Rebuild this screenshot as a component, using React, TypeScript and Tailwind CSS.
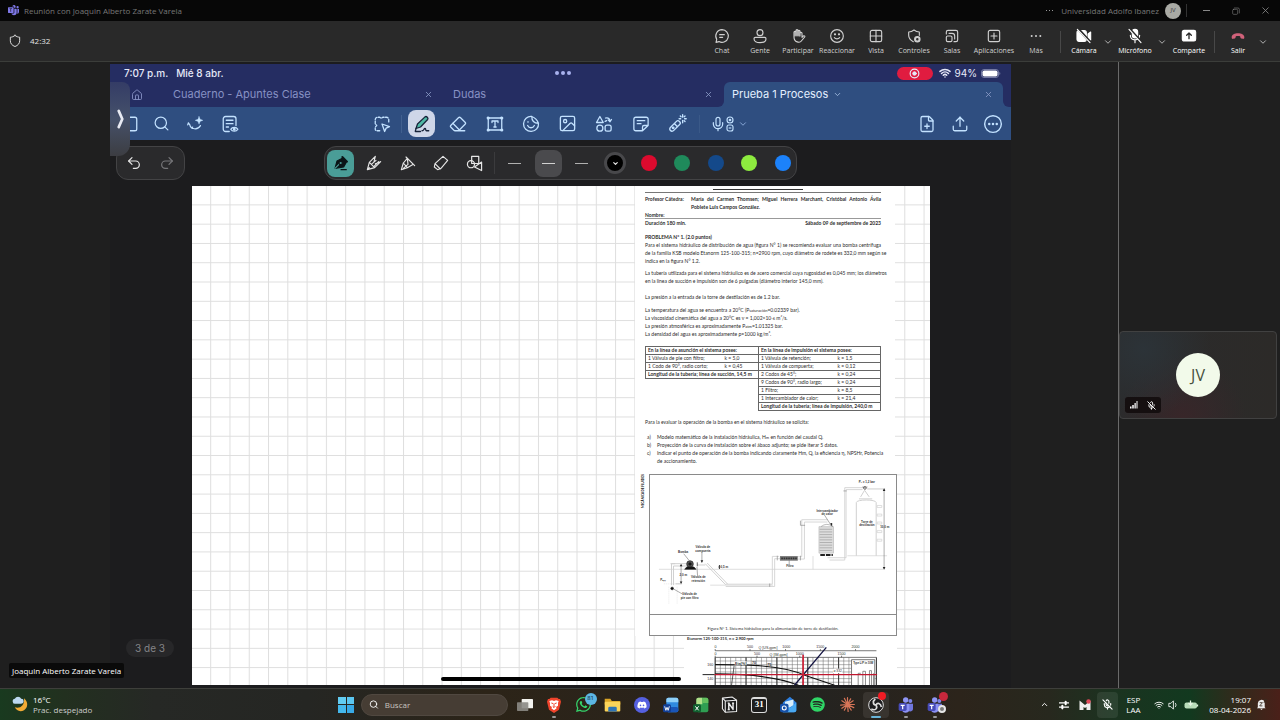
import type { ReactNode } from 'react';
import {
  ChevronDown,
  ChevronUp,
  Eraser,
  FilePlus,
  House,
  Image as ImageIcon,
  Mic,
  MicOff,
  Redo2,
  Search,
  Undo2,
  Upload,
  Wifi,
  X,
} from 'lucide-react';
import { FaDiscord, FaSpotify, FaWhatsapp } from 'react-icons/fa';
import { BsMicrosoftTeams } from 'react-icons/bs';

type IconProps = { className?: string; children: ReactNode };

function Line({ className = 'size-4', children }: IconProps) {
  return (
    <svg
      viewBox="0 0 24 24"
      className={className}
      fill="none"
      stroke="currentColor"
      strokeWidth="1.7"
      strokeLinecap="round"
      strokeLinejoin="round"
      aria-hidden="true"
    >
      {children}
    </svg>
  );
}

/* ---------- Meeting window ---------- */

function TitleBar() {
  return (
    <header className="flex h-[21px] shrink-0 items-center bg-[#070707] pl-2 text-[8px] text-[#777]">
      <BsMicrosoftTeams className="size-[11px] text-[#7f78e8]" />
      <h1 className="ml-[5px]">Reunión con Joaquin Alberto Zarate Varela</h1>
      <div className="ml-auto flex items-center">
        <button aria-label="Más opciones" className="mr-2 flex gap-[2px]">
          <i className="size-px bg-[#999]" />
          <i className="size-px bg-[#999]" />
          <i className="size-px bg-[#999]" />
        </button>
        <span>Universidad Adolfo Ibanez</span>
        <span className="ml-[6px] flex size-4 items-center justify-center rounded-full bg-[#a9aaa4] text-[6px] text-[#333]">
          JV
        </span>
        <span className="ml-[5px] h-[13px] w-px bg-[#333]" />
        <button aria-label="Minimizar" className="ml-4 h-px w-[7px] bg-[#888]" />
        <button aria-label="Restaurar" className="ml-[22px] text-[#888]">
          <Line className="size-2">
            <rect x="2" y="7" width="15" height="15" rx="3" />
            <path d="M7 3h11a4 4 0 0 1 4 4v11" />
          </Line>
        </button>
        <button aria-label="Cerrar" className="ml-5 mr-[9px] text-[#888]">
          <X className="size-[11px]" strokeWidth={1.8} />
        </button>
      </div>
    </header>
  );
}

const meetingActions: { label: string; width: string; icon: ReactNode }[] = [
  {
    label: 'Chat',
    width: 'w-[38px]',
    icon: (
      <Line>
        <path d="M12 2.500A9.500 9.500 0 1 1 7.500 20.400L3 21.500l1.100-4.500A9.500 9.500 0 0 1 12 2.500zM8.500 10h7M8.500 14h4.500" />
      </Line>
    ),
  },
  {
    label: 'Gente',
    width: 'w-[38px]',
    icon: (
      <Line>
        <circle cx="12" cy="7" r="4.5" />
        <path d="M5 14h14a2 2 0 0 1 2 2c0 4-4 6-9 6s-9-2-9-6a2 2 0 0 1 2-2z" />
      </Line>
    ),
  },
  {
    label: 'Participar',
    width: 'w-[38px]',
    icon: (
      <Line>
        <path d="M6 14V6.500a1.500 1.500 0 0 1 3 0V11 4a1.500 1.500 0 0 1 3 0v7-6a1.500 1.500 0 0 1 3 0v7-4a1.500 1.500 0 0 1 3 0v6l2-2c1-1 3 .2 2 1.500l-5 6c-2 3-11 2.500-11-6z" />
        <path d="M7.500 6v6M10.500 4v8M13.500 5v7" />
      </Line>
    ),
  },
  {
    label: 'Reaccionar',
    width: 'w-10',
    icon: (
      <Line>
        <circle cx="12" cy="12" r="9.500" />
        <path d="M8 14.500c2 2.500 6 2.500 8 0" />
        <circle cx="9" cy="9.500" r=".8" fill="currentColor" />
        <circle cx="15" cy="9.500" r=".8" fill="currentColor" />
      </Line>
    ),
  },
  {
    label: 'Vista',
    width: 'w-[38px]',
    icon: (
      <Line>
        <rect x="3.500" y="3.500" width="17" height="17" rx="2.500" />
        <path d="M12 3.500v17M3.500 12h17" />
      </Line>
    ),
  },
  {
    label: 'Controles',
    width: 'w-[38px]',
    icon: (
      <Line>
        <path d="M11 20.500C6 18 4 15 4 11V6c3 0 5.500-1 8-3 2.500 2 5 3 8 3v5" />
        <circle cx="17" cy="17" r="4" fill="currentColor" />
        <circle cx="17" cy="17" r="1" fill="#292929" stroke="#292929" />
      </Line>
    ),
  },
  {
    label: 'Salas',
    width: 'w-[38px]',
    icon: (
      <Line>
        <path d="M3.500 9V6A2.500 2.500 0 0 1 6 3.500h12A2.500 2.500 0 0 1 20.500 6v12a2.500 2.500 0 0 1-2.500 2.500h-3" />
        <rect x="3.500" y="12" width="8.500" height="8.500" rx="2" />
        <path d="M7.500 8H12a4 4 0 0 1 4 4v4.500" />
      </Line>
    ),
  },
  {
    label: 'Aplicaciones',
    width: 'w-[46px]',
    icon: (
      <Line>
        <rect x="3.500" y="3.500" width="17" height="17" rx="2.500" />
        <path d="M12 7.500v9M7.500 12h9" />
      </Line>
    ),
  },
  {
    label: 'Más',
    width: 'w-[38px]',
    icon: (
      <Line>
        <g fill="currentColor" stroke="none">
          <circle cx="5.500" cy="12" r="1.500" />
          <circle cx="12" cy="12" r="1.500" />
          <circle cx="18.500" cy="12" r="1.500" />
        </g>
      </Line>
    ),
  },
];

function MeetingButton({
  label,
  width,
  tone = 'text-[#d0d0d0]',
  children,
}: {
  label: string;
  width: string;
  tone?: string;
  children: ReactNode;
}) {
  return (
    <button className={`flex ${width} flex-col items-center gap-[2px] ${tone}`}>
      {children}
      <span className="text-[7px] leading-[10px]">{label}</span>
    </button>
  );
}

function Caret({ label }: { label: string }) {
  return (
    <button aria-label={label} className="flex w-[12px] justify-center text-[#ccc]">
      <ChevronDown className="size-[10px]" strokeWidth={2} />
    </button>
  );
}

function MeetingToolbar() {
  return (
    <nav className="flex h-[41px] shrink-0 items-center border-b border-[#3b3d3a] bg-[#292929] pl-2">
      <Line className="size-[14px] text-[#ddd]">
        <path d="M12 2.500c2.500 2 5.500 3 8 3v6c0 5-3 8-8 10-5-2-8-5-8-10v-6c2.500 0 5.500-1 8-3z" />
      </Line>
      <time className="ml-2 text-[8px] text-[#e4e4e4]">42:32</time>
      <div className="ml-auto flex items-center pt-[2px] pr-[11px]">
        {meetingActions.map((a) => (
          <MeetingButton key={a.label} label={a.label} width={a.width}>
            {a.icon}
          </MeetingButton>
        ))}
        <span className="mx-[5px] h-[22px] w-px bg-[#484848]" />
        <MeetingButton label="Cámara" width="w-9" tone="text-white">
          <Line>
            <rect x="1.500" y="4" width="14" height="16" rx="3" fill="currentColor" />
            <path d="M18 9l4-3v12l-4-3z" fill="currentColor" />
            <path d="M3 1l19 21" stroke="#292929" strokeWidth="4" />
            <path d="M2 2l19 20" />
          </Line>
        </MeetingButton>
        <Caret label="Opciones de cámara" />
        <MeetingButton label="Micrófono" width="w-[42px]" tone="text-white">
          <Line>
            <rect x="8" y="2" width="8" height="13" rx="4" fill="currentColor" />
            <path d="M5 11c0 9 14 9 14 0M12 18v4" />
            <path d="M4 1l18 20" stroke="#292929" strokeWidth="3" />
            <path d="M3 2l18 20" />
          </Line>
        </MeetingButton>
        <Caret label="Opciones de micrófono" />
        <MeetingButton label="Comparte" width="w-[42px]" tone="text-white">
          <Line>
            <rect x="2" y="3.500" width="20" height="16" rx="2.500" fill="currentColor" />
            <path d="M12 16V7.500M8.500 11L12 7.500l3.500 3.500" stroke="#292929" strokeWidth="2" />
          </Line>
        </MeetingButton>
        <span className="mx-1 h-[22px] w-px bg-[#484848]" />
        <MeetingButton label="Salir" width="w-[38px]" tone="text-white">
          <Line className="size-4 text-[#d0627a]">
            <path
              d="M2.500 14c0-8 19-8 19 0 0 2-.8 2.500-2 2.300l-2.800-.6c-1.500-.4-1-2.700-1.600-3.200-1.500-.8-4.700-.8-6.200 0-.6.500-.1 2.800-1.600 3.200l-2.800.6c-1.200.2-2-.3-2-2.300z"
              fill="currentColor"
              stroke="none"
            />
          </Line>
        </MeetingButton>
        <Caret label="Opciones para salir" />
      </div>
    </nav>
  );
}

/* ---------- Shared tablet screen ---------- */

function StatusBar() {
  return (
    <div className="flex h-[18px] items-center bg-[#252d62] pl-[14px] pr-[10px] text-[10px] font-medium text-[#e6e9f8]">
      <span className="flex flex-1 gap-2">
        <time>7:07 p.m.</time>
        <span>Mié 8 abr.</span>
      </span>
      <span className="flex gap-[2px]">
        <i className="size-1 rounded-full bg-[#a9b2ee]" />
        <i className="size-1 rounded-full bg-[#a9b2ee]" />
        <i className="size-1 rounded-full bg-[#a9b2ee]" />
      </span>
      <span className="flex flex-1 items-center justify-end gap-1">
        <span className="mr-[2px] flex h-[13px] w-9 items-center justify-center rounded-full bg-[#e01c40]">
          <Line className="size-[11px]">
            <circle cx="12" cy="12" r="9.500" strokeWidth="2.500" />
            <circle cx="12" cy="12" r="4" fill="currentColor" />
          </Line>
        </span>
        <Wifi className="size-3" strokeWidth={3} />
        <span className="font-normal">94%</span>
        <svg viewBox="0 0 40 18" className="h-[9px] w-5" aria-hidden="true">
          <rect x="1" y="1" width="34" height="16" rx="5" fill="none" stroke="#8d93b8" strokeWidth="1.500" />
          <rect x="3" y="3" width="30" height="12" rx="3.500" fill="#fff" />
          <path d="M37 6v6c2-1 2-5 0-6z" fill="#8d93b8" />
        </svg>
      </span>
    </div>
  );
}

function TabClose({ name }: { name: string }) {
  return (
    <button aria-label={`Cerrar ${name}`} className="ml-auto text-[#8a9ac6]">
      <X className="size-[9px]" strokeWidth={2.2} />
    </button>
  );
}

function Tabs() {
  return (
    <div className="flex h-[25px] bg-[#2f4e80] text-[11px] text-[#8791c4]">
      <div className="flex flex-1 items-center rounded-br-md bg-[#252d62] pl-[21px] pr-[11px]">
        <button aria-label="Inicio">
          <House className="size-3" strokeWidth={1.8} />
        </button>
        <button className="ml-[30px]">Cuaderno - Apuntes Clase</button>
        <TabClose name="Cuaderno" />
        <div className="ml-5 flex w-[260px] items-center">
          <button>Dudas</button>
          <TabClose name="Dudas" />
        </div>
      </div>
      <div className="w-[279px] bg-linear-to-b from-[#252d62] from-50% to-[#2f4e80] to-50%">
        <div className="flex h-full items-center rounded-t-md bg-[#2f4e80] pl-2 pr-[10px] text-[#e3efff]">
          <button className="flex items-center gap-[5px]">
            Prueba 1 Procesos
            <ChevronDown className="size-[9px] text-[#a9c2e6]" strokeWidth={2.2} />
          </button>
          <TabClose name="Prueba 1 Procesos" />
        </div>
      </div>
      <div className="w-2 rounded-bl-md bg-[#252d62]" />
    </div>
  );
}

function ToolCell({ label, active, children }: { label: string; active?: boolean; children: ReactNode }) {
  return (
    <button
      aria-label={label}
      className={`flex size-[27px] items-center justify-center rounded-lg ${active ? 'bg-[#ced6e8] text-[#17233a]' : ''}`}
    >
      {children}
    </button>
  );
}

function NoteToolbar() {
  return (
    <div className="flex h-[33px] items-center bg-[#2f4e80] text-[#c3e2ff]">
      <div className="flex flex-1 items-center pl-[14px]">
        <button aria-label="Páginas" className="w-[22px]">
          <Line className="size-[18px]">
            <rect x="3" y="3" width="14" height="18" rx="2.500" />
          </Line>
        </button>
        <div className="ml-[2px] flex gap-[7px]">
          <ToolCell label="Buscar">
            <Search className="size-[17px]" strokeWidth={1.7} />
          </ToolCell>
          <ToolCell label="Asistente">
            <Line className="size-[17px]">
              <path d="M2 11l2 3c1 6 11 8 15 1M2 11l-1 3M8 17l-1 2" />
              <path d="M17 2l1.500 4 4 1.500-4 1.500L17 13l-1.500-4-4-1.500 4-1.500z" fill="currentColor" strokeWidth="0.500" />
            </Line>
          </ToolCell>
          <ToolCell label="Vista de lectura">
            <Line className="size-[18px]">
              <path d="M11 22H6a3 3 0 0 1-3-3V5a3 3 0 0 1 3-3h11a3 3 0 0 1 3 3v9M7 7h9M7 11.500h9M7 16h3" />
              <path d="M13 19c2-3.500 7.500-3.500 9.500 0-2 3.500-7.500 3.500-9.500 0z" />
              <circle cx="17.700" cy="19" r="1" />
            </Line>
          </ToolCell>
        </div>
      </div>
      <div className="flex items-center pr-[14px]">
        <ToolCell label="Lazo">
          <Line className="size-[18px]">
            <path d="M9 21H5a2 2 0 0 1-2-2v-3l2-2-2-2V6M3 6a3 3 0 0 1 3-3h3l2 1.500L13 3h5a3 3 0 0 1 3 3v4" strokeDasharray="3.500 1.800" />
            <path d="M12 12l10 3.500-4.500 2L15.500 22z" />
          </Line>
        </ToolCell>
        <span className="mx-[6px] h-[18px] w-px bg-[#41608f]" />
        <div className="flex w-[283px] items-center justify-between">
          <ToolCell label="Bolígrafo" active>
            <Line className="size-[18px]">
              <path d="M4 18l2-6L16 2.500c2-1.500 5 1.500 3.500 3.500L10 16z" fill="#4fb8a5" />
              <path d="M4 18l-1 4h7M12 21c3 0 2-3 4-3 2 .2 0 3 2 3h3" />
            </Line>
          </ToolCell>
          <ToolCell label="Borrador">
            <Eraser className="size-[18px]" strokeWidth={1.7} />
          </ToolCell>
          <ToolCell label="Texto">
            <Line className="size-[18px]">
              <rect x="3" y="4" width="18" height="16" />
              <path d="M8 10V8h8v2M12 8v8M10.500 16h3" />
              <g fill="currentColor">
                <circle cx="3" cy="4" r="1.300" />
                <circle cx="21" cy="4" r="1.300" />
                <circle cx="3" cy="20" r="1.300" />
                <circle cx="21" cy="20" r="1.300" />
              </g>
            </Line>
          </ToolCell>
          <ToolCell label="Pegatinas">
            <Line className="size-[18px]">
              <path d="M13 2a10 10 0 1 0 9 9c-6 0-9-3-9-9zM13 2c4 1.500 7.500 5 9 9" />
              <path d="M7.500 14c2 4 7 4 9 0M8 9v.5" />
            </Line>
          </ToolCell>
          <ToolCell label="Imagen">
            <ImageIcon className="size-[19px]" strokeWidth={1.7} />
          </ToolCell>
          <ToolCell label="Elementos">
            <Line className="size-[18px]">
              <path d="M6.500 2L11 10H2zM14 4c4-1 6 1 6 5M20 9l-2.500-2.500M20 9l2-3M13.500 8.500l2-1" />
              <circle cx="6.500" cy="17.500" r="4" />
              <rect x="13.500" y="13.500" width="8" height="8" rx="2.500" />
            </Line>
          </ToolCell>
          <ToolCell label="Nota adhesiva">
            <Line className="size-[18px]">
              <path d="M14 21H5a2.500 2.500 0 0 1-2.500-2.500v-13A2.500 2.500 0 0 1 5 3h14a2.500 2.500 0 0 1 2.500 2.500V14zM14 21v-5a2 2 0 0 1 2-2h5.500M7 7.500h10M7 11.500h5" />
            </Line>
          </ToolCell>
          <ToolCell label="Puntero láser">
            <Line className="size-[19px]">
              <path d="M3 17l8-8c2-2 6 2 4 4l-8 8c-2.500 2.500-6.500-1.500-4-4zM8 12l4 4" />
              <circle cx="6.500" cy="17.500" r="1" />
              <path d="M18.500 1v3M18.500 8v3M14 6h2M21 6h2M15.500 2.500l1 1M21.500 2.500l-1 1M21.500 9.500l-1-1" />
            </Line>
          </ToolCell>
        </div>
        <span className="mx-2 h-[18px] w-px bg-[#3a5988]" />
        <button aria-label="Grabar audio" className="flex items-center pl-[2px]">
          <Mic className="size-4" strokeWidth={1.8} />
          <svg viewBox="0 0 12 24" className="h-4 w-2" fill="none" stroke="currentColor" strokeWidth="1.700" aria-hidden="true">
            <circle cx="6" cy="6" r="4.500" />
            <circle cx="6" cy="6" r="1.200" />
            <rect x="1.500" y="13.500" width="9" height="9" rx="3" />
            <path d="M4 18h4" />
          </svg>
          <ChevronDown className="ml-1 size-[10px] text-[#8eaedd]" strokeWidth={2.2} />
        </button>
      </div>
      <div className="flex flex-1 items-center justify-end gap-[6px] pr-[5px]">
        <ToolCell label="Añadir página">
          <FilePlus className="size-[18px]" strokeWidth={1.7} />
        </ToolCell>
        <ToolCell label="Compartir">
          <Upload className="size-[18px]" strokeWidth={1.7} />
        </ToolCell>
        <ToolCell label="Más">
          <Line className="size-5">
            <circle cx="12" cy="12" r="10" />
            <g fill="currentColor" stroke="none">
              <circle cx="7.500" cy="12" r="1.500" />
              <circle cx="12" cy="12" r="1.500" />
              <circle cx="16.500" cy="12" r="1.500" />
            </g>
          </Line>
        </ToolCell>
      </div>
    </div>
  );
}

const swatches = [
  { name: 'Rojo', color: 'bg-[#dc0a2e]' },
  { name: 'Verde', color: 'bg-[#1f8a5b]' },
  { name: 'Azul oscuro', color: 'bg-[#14498a]' },
  { name: 'Lima', color: 'bg-[#8deb3f]' },
  { name: 'Azul', color: 'bg-[#1c82fb]' },
];

function PenCell({ label, bg = '', children }: { label: string; bg?: string; children: ReactNode }) {
  return (
    <button aria-label={label} className={`flex size-[27px] items-center justify-center rounded-lg ${bg}`}>
      {children}
    </button>
  );
}

function PenBar() {
  return (
    <div className="grid h-[46px] shrink-0 grid-cols-[1fr_auto_1fr] items-center px-[6px] text-[#e6e6e6]">
      <div className="flex h-[34px] w-[69px] items-center justify-between rounded-xl border border-[#434345] bg-[#2a2a2c] px-[9px]">
        <button aria-label="Deshacer">
          <Undo2 className="size-4" strokeWidth={1.8} />
        </button>
        <button aria-label="Rehacer" className="text-[#77777a]">
          <Redo2 className="size-4" strokeWidth={1.8} />
        </button>
      </div>
      <div className="flex h-[34px] items-center rounded-xl border border-[#434345] bg-[#2a2a2c] pl-[2px]">
        <div className="flex w-[161px] justify-between">
          <PenCell label="Pluma" bg="bg-[#4a9d97] text-[#0b1517]">
            <Line className="size-4">
              <path d="M3 20l3-11 8-4 6 6-4 7z" fill="currentColor" />
              <path d="M14 3l7 7" strokeWidth="3" />
              <path d="M3 20l7-7" stroke="#4a9d97" />
              <circle cx="11.500" cy="12" r="2.500" fill="#4a9d97" />
              <path d="M12 22h8" />
            </Line>
          </PenCell>
          <PenCell label="Lápiz">
            <Line className="size-4">
              <path d="M14 2L5 11 2 22l11-3 9-9M5 11l8 8M14 2l-2 8M22 10l-8 3M8 14l7-6M12 17l7-7M2 22l3-3" />
            </Line>
          </PenCell>
          <PenCell label="Pincel">
            <Line className="size-4">
              <path d="M9 3l13 13M11 5L5 12l6 7 9-5M5 12L2 22l9-3M5 12l6 7M11 5l1 9M12 14l-7 6" />
            </Line>
          </PenCell>
          <PenCell label="Resaltador">
            <Line className="size-4">
              <path d="M15 2l7 6-10 12-5 2-5-4 1-5zM3 13l8 8" />
            </Line>
          </PenCell>
          <PenCell label="Formas">
            <Line className="size-[17px]">
              <rect x="8" y="2" width="10" height="10" />
              <circle cx="7" cy="13" r="5" />
              <path d="M22 10v12l-10-5z" />
            </Line>
          </PenCell>
        </div>
        <span className="mx-[6px] h-[22px] w-px bg-[#3b3b3d]" />
        <div className="flex w-[295px] items-center justify-between">
          <PenCell label="Trazo fino">
            <i className="h-px w-[13px] bg-[#b0b0b0]" />
          </PenCell>
          <PenCell label="Trazo medio" bg="bg-[#4a4a4d]">
            <i className="h-px w-[13px] bg-[#d2d2d2]" />
          </PenCell>
          <PenCell label="Trazo grueso">
            <i className="h-px w-[13px] bg-[#b0b0b0]" />
          </PenCell>
          <PenCell label="Negro">
            <span className="flex size-[22px] items-center justify-center rounded-full border-[3px] border-[#48484b] bg-black">
              <ChevronDown className="size-[7px]" strokeWidth={4} />
            </span>
          </PenCell>
          {swatches.map((s) => (
            <PenCell key={s.name} label={s.name}>
              <i className={`size-4 rounded-full ${s.color}`} />
            </PenCell>
          ))}
        </div>
      </div>
    </div>
  );
}

/* ---------- Document ---------- */

function Full({ children }: { children: ReactNode }) {
  return <span className="block whitespace-nowrap [text-align-last:justify]">{children}</span>;
}

function HydraulicFigure() {
  return (
    <svg
      viewBox="43 13 744 418"
      className="block h-[139px] w-full"
      fill="none"
      stroke="#9a9a9a"
      strokeWidth="2"
      fontFamily="Liberation Sans, sans-serif"
    >
      <g stroke="#cfcfcf">
        <path d="M70 297h680M536 297v-40M640 256h120M225 345h190" />
        <path d="M108 345v-65h50M114 345v-58h44M105 280h14M185 284h25M210 280l62 64M216 278l62 64" strokeWidth="3" />
        <path d="M272 349h148v-84h20M272 342h141v-84h20M490 266h20v-112h70M490 259h12v-112h78" strokeWidth="2.500" />
        <path d="M580 262h56V56h50M586 269h46V50h60" strokeWidth="2.500" />
        <path d="M667 256V95c0-10 60-10 60 0v161M675 84h40M680 78l12-20 14 20" strokeWidth="3" />
        <path d="M730 104h14v6h-14zM730 130h14v6h-14zM730 154h14v6h-14zM730 180h14v6h-14zM730 206h14v6h-14z" />
        <path d="M85 341h50M100 350v50M125 350v50" strokeDasharray="2 4" />
      </g>
      <path d="M554 168h44v80h-44z" fill="#ddd" stroke="#bbb" />
      <path d="M556 176h38M556 184h38M556 192h38M556 200h38M556 208h38M556 216h38M556 224h38M556 232h38M556 240h38" stroke="#999" />
      <path d="M560 168q18-14 36 0" />
      <path d="M558 254h38" stroke="#222" strokeWidth="6" strokeDasharray="14 3" />
      <path d="M436 264h54" stroke="#777" strokeWidth="14" />
      <path d="M440 264h48" stroke="#333" strokeWidth="5" strokeDasharray="5 2" />
      <path d="M428 256v14M498 256v14M498 150v14h14M628 60h10M685 48h16M405 340v10" stroke="#888" />
      <g fill="#111" stroke="#222">
        <circle cx="164" cy="281" r="10" fill="#555" />
        <circle cx="164" cy="281" r="4" />
        <path d="M148 297l6-7h22l6 7z" />
        <circle cx="110" cy="355" r="4" />
        <circle cx="693" cy="51" r="4" fill="none" />
        <path d="M186 276v12" />
      </g>
      <g stroke="#555" strokeWidth="1.500">
        <path d="M137 282v58M751 54v242M253 284v12M145 250l16 20M200 245v28M187 318l-2-28M115 357l28 16M570 132l22 34M464 282v-12" />
        <path d="M700 54h54M120 341h20" stroke="#999" />
      </g>
      <g fill="#222" stroke="none">
        <path d="M747 60l4-8 4 8zM747 290l4 8 4-8zM133 288l4-7 4 7zM133 334l4 7 4-7zM196 270l4 8 4-8zM588 158l6 10 0-11zM250 289l3-6 3 6zM250 291l3 6 3-6z" />
      </g>
      <g fill="#333" stroke="none" fontSize="9" fontWeight="700" textAnchor="middle">
        <text x="143" y="248">Bomba</text>
        <text x="203" y="234">Válvula de</text>
        <text x="203" y="244">compuerta</text>
        <text x="189" y="324">Válvula de</text>
        <text x="189" y="334">retención</text>
        <text x="163" y="376">Válvula de</text>
        <text x="163" y="386">pie con filtro</text>
        <text x="144" y="316">2,0 m</text>
        <text x="268" y="293">0,5 m</text>
        <text x="83" y="332">Pₐₜₘ</text>
        <text x="466" y="289">Filtro</text>
        <text x="579" y="123">Intercambiador</text>
        <text x="579" y="133">de calor</text>
        <text x="699" y="156">Torre de</text>
        <text x="699" y="166">destilación</text>
        <text x="699" y="35">Pₑ = 1,2 bar</text>
        <text x="753" y="171">10,0 m</text>
      </g>
    </svg>
  );
}

const gridColumns = Array.from({ length: 27 }, (_, i) => 241 + i * 15.5);

function PumpChart() {
  return (
    <svg
      viewBox="147 110 642 132"
      className="block h-11 w-full"
      fill="none"
      stroke="#333"
      strokeWidth="2"
      fontFamily="Liberation Sans, sans-serif"
    >
      <path d="M241 136h486M241 131v5M346 131v5M453 131v5M558 131v5M664 131v5" />
      <path d="M241 156h486M241 151v5M367 151v5M496 151v5M622 151v5" />
      <g stroke="#666" strokeWidth="1.500">
        {gridColumns.map((x) => (
          <path key={x} d={`M${x} 156v86`} />
        ))}
        <path d="M241 167h410M241 178h410M241 189h410M241 200h410M241 220h486M241 231h410" />
      </g>
      <path d="M241 156v86M334 156v86M427 156v86M520 156v86M613 156v86M727 156v86" strokeWidth="3" />
      <path d="M652 163h70v79h-70z" fill="#fff" />
      <path d="M686 242v-44h8v44M706 242v-46h6v46M672 242v-38h8M718 242v-38" stroke="#555" />
      <path d="M298 182l-8 60" stroke="#111" strokeWidth="2" />
      <path d="M241 178c90 0 200 0 270 32l90 30M241 206c90 0 190 8 255 36" stroke="#111" strokeWidth="3.500" />
      <path d="M300 168h36v12h-36z" fill="#fff" stroke="none" />
      <path d="M596 190h28v14h-28z" fill="#fff" stroke="none" />
      <path d="M576 126l-96 114" stroke="#111140" strokeWidth="4" />
      <path d="M203 208h36" stroke="#222" strokeWidth="3" />
      <path d="M239 208h490" stroke="#c01830" strokeWidth="3.500" />
      <path d="M506 148v94" stroke="#d01c34" strokeWidth="5" />
      <g fill="#333" stroke="none" fontSize="11" textAnchor="middle">
        <text x="242" y="129">0</text>
        <text x="346" y="129">500</text>
        <text x="400" y="131">Q [US.gpm]</text>
        <text x="455" y="129">1000</text>
        <text x="558" y="129">1500</text>
        <text x="664" y="129">2000</text>
        <text x="242" y="150">0</text>
        <text x="367" y="150">500</text>
        <text x="432" y="152">Q [IM.gpm]</text>
        <text x="496" y="150">1000</text>
        <text x="622" y="150">1500</text>
        <text x="226" y="182">160</text>
        <text x="226" y="225">140</text>
        <text x="318" y="179" fontWeight="700">Eta[%]</text>
        <text x="358" y="176" fontWeight="700">70</text>
        <text x="404" y="182" fontWeight="700">75</text>
        <text x="610" y="201" fontSize="10">ø 332</text>
        <text x="687" y="175" fontSize="8" fontWeight="700">Type L/P in 10W</text>
      </g>
    </svg>
  );
}

const suction = [
  ['1 Válvula de pie con filtro;', 'k = 5,0'],
  ['1 Codo de 90°, radio corto;', 'k = 0,45'],
];
const discharge = [
  ['1 Válvula de retención;', 'k = 1,5'],
  ['1 Válvula de compuerta;', 'k = 0,12'],
  ['2 Codos de 45°;', 'k = 0,24'],
  ['9 Codos de 90°, radio largo;', 'k = 0,24'],
  ['1 Filtro;', 'k = 8,5'],
  ['1 Intercambiador de calor;', 'k = 21,4'],
];

function LossTable({ title, rows, total, split }: { title: string; rows: string[][]; total: string; split: string }) {
  return (
    <table className="w-full border-collapse whitespace-nowrap text-left [&_td]:h-2 [&_td]:p-0 [&_th]:h-2 [&_th]:p-0 [&_tr]:border [&_tr]:border-[#666]">
      <thead>
        <tr>
          <th colSpan={2}>
            <span className="block h-[7px] pl-[2px] leading-[7px]">{title}</span>
          </th>
        </tr>
      </thead>
      <tbody>
        {rows.map(([name, k]) => (
          <tr key={name}>
            <td className={split}>
              <span className="block h-[7px] pl-[2px] leading-[7px]">{name}</span>
            </td>
            <td>
              <span className="block h-[7px] leading-[7px]">{k}</span>
            </td>
          </tr>
        ))}
        <tr>
          <th colSpan={2}>
            <span className="block h-[7px] pl-[2px] leading-[7px]">{total}</span>
          </th>
        </tr>
      </tbody>
    </table>
  );
}

function Exam() {
  return (
    <article className="relative ml-auto mr-[35px] w-[260px] font-[Lato,'Liberation_Sans',sans-serif] text-[5px] leading-[8px] text-[#2c2c2c]">
      <div className="bg-white pl-[10px] pr-[14px]">
        <div className="flex h-[7px] flex-col items-center border-b border-[#777] pt-[3px] pr-[10px]">
          <span className="h-px w-[90px] bg-[#333]" />
        </div>
        <div className="flex gap-[5px] pt-[2px] font-bold">
          <span className="w-[41px] shrink-0 whitespace-nowrap">Profesor Cátedra:</span>
          <div className="flex-1">
            <Full>María del Carmen Thomsen; Miguel Herrera Marchant, Cristóbal Antonio Ávila</Full>
            Poblete Luis Campos González.
          </div>
        </div>
        <p className="h-2 border-b border-[#999] font-bold">Nombre:</p>
        <p className="flex justify-between font-bold">
          <span>Duración 180 min.</span>
          <span>Sábado 09 de septiembre de 2023</span>
        </p>
        <h2 className="mt-[6px] font-bold">PROBLEMA N° 1. (2.0 puntos)</h2>
        <p>
          <Full>Para el sistema hidráulico de distribución de agua (figura N° 1) se recomienda evaluar una bomba centrífuga</Full>
          <Full>de la familia KSB modelo Etanorm 125-100-315; n=2900 rpm, cuyo diámetro de rodete es 332,0 mm según se</Full>
          indica en la figura N° 1.2.
        </p>
        <p className="mt-1">
          <Full>La tubería utilizada para el sistema hidráulico es de acero comercial cuya rugosidad es 0,045 mm; los diámetros</Full>
          en la línea de succión e impulsión son de 6 pulgadas (diámetro interior 145,0 mm).
        </p>
        <p className="mt-2">La presión a la entrada de la torre de destilación es de 1.2 bar.</p>
        <p className="mt-[5px]">
          La temperatura del agua se encuentra a 20°C (P<sub className="bottom-0 text-[4px]">saturación</sub>=0.02339 bar).
        </p>
        <p>
          La viscosidad cinemática del agua a 20°C es ν = 1,002×10<sup className="top-0 text-[4px]">-6</sup> m²/s.
        </p>
        <p>
          La presión atmosférica es aproximadamente P<sub className="bottom-0 text-[4px]">atm</sub>=1.01325 bar.
        </p>
        <p>La densidad del agua es aproximadamente ρ=1000 kg/m³.</p>
        <div className="mt-2 flex h-[64px] items-start">
          <div className="w-[114px] shrink-0">
            <LossTable
              title="En la línea de asunción el sistema posee:"
              rows={suction}
              total="Longitud de la tubería; línea de succión, 14,5 m"
              split="w-[79px]"
            />
          </div>
          <div className="-ml-px flex-1">
            <LossTable
              title="En la línea de impulsión el sistema posee:"
              rows={discharge}
              total="Longitud de la tubería; línea de impulsión, 240,0 m"
              split="w-[79px]"
            />
          </div>
        </div>
        <p className="mt-2">Para la evaluar la operación de la bomba en el sistema hidráulico se solicita:</p>
        <ol className="mt-[7px]">
          <li className="flex gap-[2px]">
            <span className="w-[10px] shrink-0 pl-[2px]">a)</span>
            <span>
              Modelo matemático de la instalación hidráulica, H<sub className="bottom-0 text-[4px]">m</sub> en función del caudal Q.
            </span>
          </li>
          <li className="flex gap-[2px]">
            <span className="w-[10px] shrink-0 pl-[2px]">b)</span>
            <span>Proyección de la curva de instalación sobre el ábaco adjunto; se pide iterar 5 datos.</span>
          </li>
          <li className="flex gap-[2px]">
            <span className="w-[10px] shrink-0 pl-[2px]">c)</span>
            <div className="flex-1">
              <Full>Indicar el punto de operación de la bomba indicando claramente Hm, Q, la eficiencia η, NPSHr, Potencia</Full>
              de accionamiento.
            </div>
          </li>
        </ol>
      </div>
      <div className="flex bg-white pt-[9px]">
        <div className="w-[14px] shrink-0 pl-[6px]">
          <span className="block rotate-180 text-[3px] leading-[4px] font-bold whitespace-nowrap text-black [writing-mode:vertical-rl]">
            MECÁNICA DE FLUIDOS
          </span>
        </div>
        <figure className="-mr-[2px] flex-1 border border-[#8a8a8a] bg-white">
          <HydraulicFigure />
          <figcaption className="h-[21px] border-t border-[#8a8a8a] pt-[10px] text-center text-[4px]">
            Figura N° 1. Sistema hidráulico para la alimentación de torre de destilación.
          </figcaption>
        </figure>
      </div>
      <div className="-mr-[2px] ml-[49px] bg-white">
        <h3 className="h-[6px] pl-[3px] text-[4px] leading-[5px] font-bold">Etanorm 125-100-315, n = 2.900 rpm</h3>
        <PumpChart />
      </div>
    </article>
  );
}

function Canvas() {
  return (
    <div className="relative mr-[81px] mb-[3px] ml-[82px] min-h-0 flex-1 overflow-hidden bg-white">
      <svg className="absolute inset-0 size-full" aria-hidden="true">
        <defs>
          <pattern id="paper" x="18.200" y="18.400" width="19.280" height="19.280" patternUnits="userSpaceOnUse">
            <path d="M.5 0v19.280M0 .5h19.280" fill="none" stroke="#dedede" strokeWidth="1" />
          </pattern>
        </defs>
        <rect width="100%" height="100%" fill="url(#paper)" />
      </svg>
      <Exam />
      <span className="absolute bottom-1 left-[249px] h-1 w-[240px] rounded-full bg-black" />
    </div>
  );
}

function SharedScreen() {
  return (
    <section className="relative flex min-w-0 flex-1 flex-col bg-[#1c1c1e] pt-[2px] font-[Inter,sans-serif]">
      <StatusBar />
      <Tabs />
      <NoteToolbar />
      <PenBar />
      <Canvas />
      <button
        aria-label="Mostrar panel lateral"
        className="absolute top-5 left-0 flex h-[74px] w-5 items-center justify-center rounded-tr-lg rounded-br-xl bg-linear-to-b from-[#343c66] via-[#46516a] to-[#3c3d42]"
      >
        <svg viewBox="0 0 10 24" className="h-[22px] w-[9px]" fill="none" stroke="#e8eaf2" strokeWidth="3" strokeLinejoin="round" strokeLinecap="round">
          <path d="M3 3l4 9-4 9" />
        </svg>
      </button>
      <span className="absolute bottom-[31px] left-4 flex h-[18px] w-12 items-center justify-center rounded-full bg-[#272729] text-[10px] text-[#858588]">
        3 de 3
      </span>
    </section>
  );
}

function Participants() {
  return (
    <aside className="flex w-[162px] shrink-0 items-center border-l border-[#6a6a6a] pr-[3px]">
      <div className="relative flex h-[88px] flex-1 items-center justify-center rounded-[4px] border border-[#414141] bg-[radial-gradient(circle_at_15%_20%,#2c3338,transparent_45%),radial-gradient(circle_at_40%_100%,#382629,transparent_50%),linear-gradient(90deg,#2b2b2c,#2c2a28)]">
        <span className="flex size-11 items-center justify-center rounded-full bg-[#f2faea] text-[16px] text-[#46503c]">JV</span>
        <span className="absolute bottom-[5px] left-[5px] flex h-4 w-9 items-center justify-center gap-[9px] rounded-[3px] bg-[#150f10] text-white">
          <svg viewBox="0 0 16 16" className="size-2" fill="currentColor" aria-label="Señal">
            <path d="M0 11h3v4H0zM4.500 8h3v7h-3zM9 4h2.500v11H9zM13 0h2v15h-2z" />
          </svg>
          <MicOff className="size-[9px]" strokeWidth={2.5} />
        </span>
      </div>
    </aside>
  );
}

/* ---------- Taskbar ---------- */

function AppIcon({
  label,
  running,
  active,
  children,
}: {
  label: string;
  running?: boolean;
  active?: boolean;
  children: ReactNode;
}) {
  return (
    <button
      aria-label={label}
      className={`relative flex size-[26px] items-center justify-center rounded-[4px] ${active ? 'bg-[#38342f]' : ''}`}
    >
      {children}
      {running && <i className="absolute bottom-0 h-[2px] w-1 rounded-full bg-[#999]" />}
      {active && <i className="absolute bottom-0 h-[2px] w-[10px] rounded-full bg-[#69b4d8]" />}
    </button>
  );
}

function TeamsMark() {
  return (
    <svg viewBox="0 0 24 24" className="size-4" aria-hidden="true">
      <circle cx="18.500" cy="6" r="3" fill="#7d84e8" />
      <circle cx="11.500" cy="4.500" r="4" fill="#8f96f5" />
      <path d="M14 10h8.500v8c0 5-8.500 5-8.500 0z" fill="#7076dc" />
      <path d="M6 10h11v9c0 6-11 6-11 0z" fill="#8b91f3" />
      <rect x="1" y="9" width="12" height="12" rx="2.500" fill="#474bb8" />
      <path d="M4 12.500h6M7 12.500v6" stroke="#fff" strokeWidth="1.800" />
    </svg>
  );
}

function PinnedApps() {
  return (
    <div className="flex w-[436px] items-center justify-between">
      <AppIcon label="Vista de tareas">
        <svg viewBox="0 0 24 24" className="size-4">
          <rect x="7" y="3" width="17" height="14" rx="1" fill="#f2f2ee" />
          <rect x="0" y="8" width="17" height="13" rx="1" fill="#8b8984" opacity=".9" />
        </svg>
      </AppIcon>
      <AppIcon label="Brave" running>
        <svg viewBox="0 0 24 24" className="size-4">
          <path d="M7 1h10l2 2 2 0 1.500 4-3 12L12 24l-7.500-5-3-12L3 3h2z" fill="#f0442c" />
          <path d="M5 6l4-1 3 1 3-1 4 1-1 3 0 4-3 2 1 2-4 3-4-3 1-2-3-2V9z" fill="#fff" />
          <path d="M8 9l3 1M16 9l-3 1M12 10v5M10 14l2 2 2-2" stroke="#f0442c" strokeWidth="1.500" fill="none" />
        </svg>
      </AppIcon>
      <AppIcon label="WhatsApp">
        <FaWhatsapp className="size-[17px] text-[#35d36b]" />
        <span className="absolute top-[1px] right-0 flex size-3 items-center justify-center rounded-full bg-[#5cb6e4] text-[6px] text-[#10242f]">
          81
        </span>
      </AppIcon>
      <AppIcon label="Explorador">
        <svg viewBox="0 0 24 24" className="size-[17px]">
          <path d="M1 4h8l2 3h12v5H1z" fill="#dba526" />
          <rect x="1" y="8" width="22" height="14" rx="1.500" fill="#fbd45a" />
          <path d="M6 22v-5a2 2 0 0 1 2-2h8a2 2 0 0 1 2 2v5z" fill="#2f74b5" />
        </svg>
      </AppIcon>
      <AppIcon label="Discord">
        <span className="flex size-4 items-center justify-center rounded-full bg-[#5560e0]">
          <FaDiscord className="size-[10px] text-white" />
        </span>
      </AppIcon>
      <AppIcon label="Word">
        <svg viewBox="0 0 24 24" className="size-4">
          <rect x="5" y="1" width="18" height="22" rx="3" fill="#2f8ae0" />
          <path d="M5 4a3 3 0 0 1 3-3h12a3 3 0 0 1 3 3v4H5z" fill="#8fd0f8" />
          <rect x="5" y="15" width="18" height="8" rx="3" fill="#1955b8" />
          <rect x="0" y="11" width="12" height="12" rx="2.500" fill="#123f96" />
          <path d="M2.500 14l1.800 6L6 15.500 7.700 20l1.800-6" stroke="#fff" strokeWidth="1.400" fill="none" />
        </svg>
      </AppIcon>
      <AppIcon label="Excel">
        <svg viewBox="0 0 24 24" className="size-4">
          <rect x="5" y="1" width="18" height="22" rx="3" fill="#2f9e52" />
          <path d="M5 4a3 3 0 0 1 3-3h6v10H5z" fill="#b3e08a" />
          <path d="M14 1h6a3 3 0 0 1 3 3v5h-9z" fill="#63bf5e" />
          <rect x="0" y="11" width="12" height="12" rx="2.500" fill="#10602f" />
          <path d="M3.500 14l5 6M8.500 14l-5 6" stroke="#fff" strokeWidth="1.500" />
        </svg>
      </AppIcon>
      <AppIcon label="Notion">
        <svg viewBox="0 0 24 24" className="size-[17px]" fill="none" stroke="#eee" strokeWidth="1.500" strokeLinejoin="round">
          <path d="M2 3l14-1.500L22 6v16L6 23l-4-5z" fill="#1b1b1b" />
          <path d="M2 3l4 4v16M6 7l16-1" />
          <path d="M11 19v-9l6 9v-9M9.500 10h2.500M15.500 10h3M9.500 19h3" strokeWidth="2" />
        </svg>
      </AppIcon>
      <AppIcon label="Notion Calendar">
        <span className="flex size-4 items-center justify-center rounded-[3px] border border-[#ddd] border-t-2 bg-[#1d1d1d] font-['Liberation_Serif',serif] text-[9px] font-bold text-white">
          31
        </span>
      </AppIcon>
      <AppIcon label="Outlook">
        <svg viewBox="0 0 24 24" className="size-[17px]">
          <path d="M4 9L14 1l9 8v11a3 3 0 0 1-3 3H4z" fill="#2c7fe0" />
          <path d="M7 8l12-3v8l-7 4-5-4z" fill="#d8eefc" />
          <path d="M4 12l10 5 9-8v11a3 3 0 0 1-3 3H4z" fill="#49a9f2" />
          <rect x="0" y="11" width="12" height="12" rx="2.500" fill="#1450a8" />
          <circle cx="6" cy="17" r="2.800" fill="none" stroke="#fff" strokeWidth="1.500" />
        </svg>
      </AppIcon>
      <AppIcon label="Spotify">
        <FaSpotify className="size-[15px] text-[#2fd566]" />
      </AppIcon>
      <AppIcon label="Claude">
        <svg viewBox="0 0 24 24" className="size-[15px]" stroke="#d87558" strokeWidth="1.900" strokeLinecap="round">
          <path d="M12 12V1M12 12l5-9M12 12l9-6M12 12h11M12 12l10 5M12 12l6 9M12 12l1 11M12 12l-5 9M12 12l-9 6M12 12L1 13M12 12L3 6M12 12L7 2" />
        </svg>
      </AppIcon>
      <AppIcon label="OBS Studio" active>
        <svg viewBox="0 0 24 24" className="size-4" fill="none" stroke="#ddd" strokeWidth="1.500">
          <circle cx="12" cy="12" r="11" fill="#1c1c1e" />
          <path d="M11 3c-5 4-3 9 1 9M20 15c-1-6-6-7-8-3M5 18c6 3 10-1 7-6" strokeWidth="2.500" />
        </svg>
        <i className="absolute top-0 right-[3px] size-2 rounded-full bg-[#f01c24]" />
      </AppIcon>
      <AppIcon label="Teams" running>
        <TeamsMark />
      </AppIcon>
      <AppIcon label="Reunión de Teams" running>
        <TeamsMark />
        <i className="absolute top-0 right-0 size-[9px] rounded-full bg-[#c8283c]" />
        <i className="absolute right-[2px] bottom-[5px] size-2 rounded-full border-2 border-[#e6e6e6] bg-[#777]" />
      </AppIcon>
    </div>
  );
}

function Taskbar() {
  return (
    <footer className="grid h-8 shrink-0 grid-cols-[1fr_auto_1fr] items-center border-t border-[#3e3f3b] bg-[linear-gradient(90deg,#193a1f_0%,#22301f_5%,#262825_12%,#252623_24%,#2c2418_38%,#2a231b_52%,#232321_62%,#2c241b_75%,#27281e_82%,#1b3320_87%,#12391f_93%,#2d2c1c_96%,#4a2019_100%)] text-white">
      <div className="flex items-center gap-1 pl-3">
        <svg viewBox="0 0 24 24" className="size-[17px]" aria-hidden="true">
          <path d="M17 3c6 5 6 13 0 17-5 3-11 1-13-4 8 2 14-3 13-13z" fill="#f2ab35" />
          <path d="M5 11a3.500 3.500 0 0 1-1-7 5 5 0 0 1 9 0 3.500 3.500 0 0 1 0 7z" fill="#bcd8f0" />
        </svg>
        <p className="text-[8px] leading-[10px]">
          16°C
          <br />
          <span className="text-[#ccc]">Prac. despejado</span>
        </p>
      </div>
      <div className="flex items-center pl-[6px]">
        <button aria-label="Inicio" className="grid size-4 grid-cols-2 gap-px">
          <i className="bg-[#62ccf2]" />
          <i className="bg-[#5bc6f0]" />
          <i className="bg-[#44b8ec]" />
          <i className="bg-[#38a9e6]" />
        </button>
        <label className="mr-1 ml-[7px] flex h-[22px] w-[147px] items-center gap-[6px] rounded-full border border-[#504840] bg-[#463d34] pl-[7px]">
          <Search className="size-[11px]" strokeWidth={2.2} aria-label="Buscar" />
          <input type="search" placeholder="Buscar" className="w-full bg-transparent text-[8px] outline-none placeholder:text-[#c9c5c0]" />
        </label>
        <PinnedApps />
      </div>
      <div className="flex h-full items-center justify-end pr-[13px]">
        <button aria-label="Mostrar iconos ocultos" className="mr-[10px]">
          <ChevronUp className="size-[9px]" strokeWidth={2.5} />
        </button>
        <svg viewBox="0 0 24 24" className="mr-[10px] size-[10px]" stroke="#fff" strokeWidth="3" strokeLinecap="round">
          <path d="M1 7h22M1 17h22" />
          <path d="M16 4v6M8 14v6" strokeWidth="5" />
        </svg>
        <svg viewBox="0 0 24 24" className="mr-[6px] size-3">
          <path d="M1 3l11 9 11-9v19h-8v-6l-3 2-3-2v6H1z" fill="#eee" />
          <circle cx="19" cy="5" r="4.500" fill="#e0485a" />
        </svg>
        <span className="flex h-[26px] w-[21px] items-center justify-center rounded-[4px] bg-white/8">
          <MicOff className="size-[11px]" strokeWidth={2.5} />
        </span>
        <p className="w-[31px] text-center text-[8px] leading-[10px]">
          ESP
          <br />
          LAA
        </p>
        <Wifi className="ml-[5px] size-[10px]" strokeWidth={2.2} />
        <svg viewBox="0 0 24 24" className="ml-1 size-[10px]" fill="none" stroke="#fff" strokeWidth="2" strokeLinejoin="round">
          <path d="M2 8h5l6-6v20l-6-6H2zM17 7c3 3 3 7 0 10" />
        </svg>
        <svg viewBox="0 0 30 20" className="ml-[6px] h-[10px] w-[15px]">
          <rect x="1" y="5" width="25" height="12" rx="4" fill="#b9dcba" />
          <path d="M27 9v4M13 1v8M9 6l4 4 4-4" stroke="#e5f4e4" strokeWidth="2.500" fill="none" />
        </svg>
        <p className="ml-2 w-[44px] text-right text-[8px] leading-[10px] whitespace-nowrap">
          19:07
          <br />
          08-04-2026
        </p>
        <svg viewBox="0 0 24 24" className="ml-[5px] size-[11px]">
          <path d="M4 18V9a8 8 0 0 1 15-3v12l2 2H2zM9 21h6l-3 3z" fill="#eee" />
          <path d="M8 8h6l-6 7h6M17 1h6l-6 6h6" stroke="#3a2c22" strokeWidth="1.800" fill="none" />
        </svg>
      </div>
    </footer>
  );
}

export default function App() {
  return (
    <div className="flex h-screen flex-col overflow-hidden bg-[#1f1f1f] font-['Open_Sans','Noto_Sans',sans-serif]">
      <TitleBar />
      <MeetingToolbar />
      <main className="relative flex min-h-0 flex-1">
        <div className="w-[110px] shrink-0" />
        <SharedScreen />
        <div className="w-[107px] shrink-0" />
        <Participants />
        <span className="absolute bottom-[10px] left-[9px] z-10 rounded-[2px] bg-[#0a0a0a] px-[3px] text-[8px] leading-[15px] whitespace-nowrap text-white">
          Joaquin Alberto Zarate Varela
        </span>
      </main>
      <Taskbar />
    </div>
  );
}
